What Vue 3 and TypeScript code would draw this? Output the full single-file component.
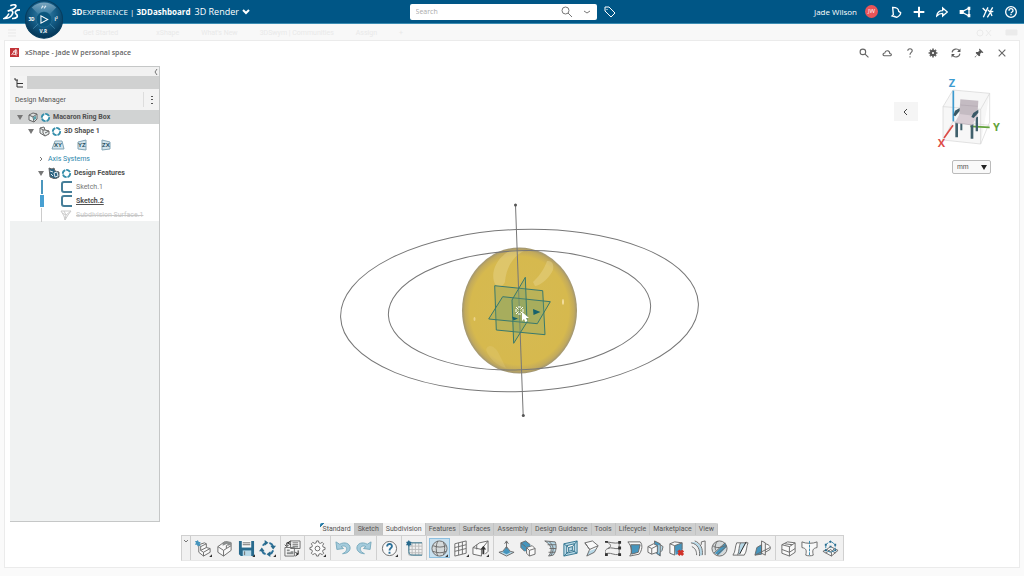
<script setup lang="ts">
import { ref } from 'vue'

// Each shape pairs a paint class with its path data on an 18 x 18 grid.
type Shape = [paint: string, d: string]
interface Tool { name: string; shapes: Shape[]; more?: boolean }

const search = ref('')
const unit = ref('mm')
const activeTool = ref('Sphere')

const tabs = [
  { name: 'Standard', tone: 'light marked' },
  { name: 'Sketch', tone: 'dark' },
  { name: 'Subdivision', tone: 'light' },
  { name: 'Features', tone: '' },
  { name: 'Surfaces', tone: '' },
  { name: 'Assembly', tone: '' },
  { name: 'Design Guidance', tone: '' },
  { name: 'Tools', tone: '' },
  { name: 'Lifecycle', tone: '' },
  { name: 'Marketplace', tone: '' },
  { name: 'View', tone: '' },
]

const groups: Tool[][] = [
  [
    { name: 'New component', more: true, shapes: [
      ['white', 'M4 5l6-2 2 1v4l4 1v4l-7 4-6-4z'],
      ['line', 'M4 5l6-2 2 1-6 3-2-2v8l5 4 7-4V9l-4-1V4M6 7v4l3 2v4M9 13l7-4M6 11l6-3'],
      ['blue', 'M3 0l1 2h2L5 4l1 2H4L3 7 2 5H0l1-2-1-2h2z'] ] },
    { name: 'Insert', shapes: [
      ['white', 'M2 7l7-5 7 1v8l-8 6-6-4z'], ['line', 'M2 7v6l6 4v-6L2 7l7-5 7 1v8l-8 6M8 11l3-2V6l5-3M11 9l5-3'],
      ['gray', 'M7 3l4-2 5 1v3l-3 1-1-2-5 2z'] ] },
    { name: 'Save', more: true, shapes: [
      ['navy', 'M1 1h16v16H3l-2-2z'], ['white', 'M4 1h10v7H4z'], ['pale', 'M5 11h9v6H5z'],
      ['line', 'M5 3h8M5 5h8M7 12v4'] ] },
    { name: 'Update', more: true, shapes: [
      ['ringblue', 'M4 6a6 6 0 0 1 4-3M11 3a6 6 0 0 1 4 4M15 11a6 6 0 0 1-4 4M7 15a6 6 0 0 1-4-4'],
      ['navy', 'M6 0l4 3-4 3zM18 6l-3 4-3-4zM12 12v6l-4-3zM0 12l3-4 3 4z'] ] },
  ],
  [
    { name: 'Replace', shapes: [
      ['white', 'M7 1h10v8H7zM1 8h10v9H1z'], ['line', 'M7 1h10v8H7zM1 8h10v9H1zM9 3h6M9 5h6'],
      ['gray', 'M3 10h3v2H3zM7 12h3v3H3v-2h4zM9 6h6v2H9z'], ['darkline thin', 'M3 6V3h3M1 5l2 2 2-2M15 11v4h-2M15 15l-3-2M15 15l-3 2M4 3l3-2M4 3l3 2'] ] },
  ],
  [
    { name: 'Settings', more: true, shapes: [
      ['outline', 'M8 1h2l.5 2 1.5.6L14 2.500l1.500 1.500-1.100 2 .6 1.500 2 .5v2l-2 .5-.6 1.500 1.100 2L14 15.500l-2-1.100-1.500.6-.5 2H8l-.5-2-1.500-.6-2 1.100L2.500 14l1.100-2L3 10.500 1 10V8l2-.5L3.600 6 2.500 4 4 2.500l2 1.100L7.500 3z'],
      ['outline', 'M11.500 9a2.500 2.500 0 1 1-5 0a2.500 2.500 0 1 1 5 0z'] ] },
  ],
  [
    { name: 'Undo', shapes: [['sky', 'M1 2l1 8 7-1-2.500-2c4-2 7 1 5.500 4-.6 1.500-2 2.500-4 3.500 5 0 8-3 8-6 0-5-6-7-11-4z']] },
    { name: 'Redo', shapes: [['sky', 'M17 2l-1 8-7-1 2.500-2c-4-2-7 1-5.500 4 .6 1.500 2 2.500 4 3.500-5 0-8-3-8-6 0-5 6-7 11-4z']] },
  ],
  [
    { name: 'Help', more: true, shapes: [
      ['outline', 'M16.500 9a7.500 7.500 0 1 1-15 0a7.500 7.500 0 1 1 15 0z'],
      ['ringblue', 'M6.500 7c0-4 5.500-3.500 5 0-.3 1.500-2.500 2-2.500 4M9 12.500v2'] ] },
  ],
  [
    { name: 'Subdivision sketch', shapes: [
      ['faint', 'M3 3h14v13H3zM6.500 3v13M10 3v13M13.500 3v13M3 6.500h14M3 10h14M3 13.500h14'],
      ['blueline', 'M3 3h14M3 3v9c0 3 1 4 4 4h10'], ['navy', 'M3 0l1 1.500 2 .5-1 1.500L6 5.500l-2 0L3 7 2 5.500H0l1-2L0 2l2-.5z'] ] },
  ],
  [
    { name: 'Sphere', more: true, shapes: [
      ['ball', 'M17 9A8 8 0 1 1 1 9a8 8 0 1 1 16 0z'],
      ['line', 'M17 9A8 8 0 1 1 1 9a8 8 0 1 1 16 0zM7 1c-2 5-2 11 0 16M13 2c2 4 2 10 0 14M2 6c5 2 10 2 14 0M2 12c5 2 10 2 14 0'] ] },
    { name: 'Plane grid', more: true, shapes: [
      ['white', 'M3 4l12-3v13L3 17z'], ['line', 'M3 4l12-3v13L3 17zM7 3v13M11 2v13M3 8l12-3M3 12l12-3'] ] },
    { name: 'Box pull', more: true, shapes: [
      ['white', 'M1 8l7-5 9-2v11l-6 5-10-2z'], ['line', 'M1 8v7l9 2v-7L1 8l7-5 9-2v11l-3 3M10 10l7-9M5 5v5'],
      ['dark', 'M11 15v-5H9l3-4 3 4h-2v5z'] ] },
  ],
  [
    { name: 'Extrude', shapes: [
      ['pale', 'M1 13l4-1 4-5 4 5 4 1-8 4z'], ['blue', 'M5 13l4-6 4 6-4 2z'], ['line', 'M1 13l4-1 4-5 4 5 4 1-8 4zM9 9V1M7 4l2-3 2 3'] ] },
    { name: 'Bridge', shapes: [
      ['blue', 'M2 3l5-2 5 4-1 6-5 1-4-4z'], ['white', 'M8 8l6-2 3 3v6l-6 2-3-3z'],
      ['line', 'M7 1L2 3v5l4 4M7 1l5 4M2 3l5 4M8 8l6-2 3 3v6l-6 2-3-3zM8 8l3 3v6M11 11l6-2'] ] },
    { name: 'Sweep face', shapes: [
      ['pale', 'M4 1l11 1c2 5 1 10-2 14l-5 1c5-6 3-12-4-16z'],
      ['line', 'M4 1l11 1c2 5 1 10-2 14l-5 1c5-6 3-12-4-16zM9 2c5 5 5 9 1 15M7 5l9 0M9 9h7M8 13l7 0'] ] },
    { name: 'Inset', shapes: [
      ['pale', 'M2 4l14-3v13L2 17z'], ['white', 'M5 6l8-2v8l-8 2z'], ['pale', 'M7 8l4-1v4l-4 1z'],
      ['blueline', 'M2 4l14-3v13L2 17zM5 6l8-2v8l-8 2zM7 8l4-1v4l-4 1zM2 4l5 4M16 1l-5 6M16 14l-5-3M2 17l5-5'] ] },
    { name: 'Bend', shapes: [
      ['white', 'M2 3l8-2 6 5-4 7-8 4 2-7z'], ['pale', 'M6 12l8-3-2 4-8 4z'],
      ['line', 'M2 3l8-2 6 5-4 7-8 4 3-7zM2 3l5 7M7 10l9-4'] ] },
    { name: 'Edge chain', shapes: [
      ['line', 'M1 2c4 0 8 2 14 1M3 9c4-2 7 1 12 0M1 15c4-3 9 2 14 0M2 2c5 3 5 5 1 7s-3 4-2 6M15 3v13'],
      ['dark', 'M14 1h3v3h-3zM14 7h3v3h-3zM14 14h3v3h-3zM0 14h3v3H0zM0 1h3v2H0z'] ] },
    { name: 'Fill', shapes: [
      ['white', 'M2 2l13 0 2 3-3 10-10 2 2-7z'], ['blue', 'M5 5h10l-2 8-7 2z'],
      ['line', 'M2 2h13c3 3 2 9-1 13L4 17c3-5 2-10-2-15zM5 5h10l-2 8-7 2z'] ] },
    { name: 'Mirror', shapes: [
      ['blue', 'M8 1l6 3v13l-6-4z'], ['white', 'M1 7l6-3 4 2v7l-6 2-4-2z'], ['pale', 'M12 5l5 2-1 4-4 4z'],
      ['line', 'M1 7l6-3 4 2v7l-6 2-4-2zM1 7l4 2v6M5 9l6-3M8 4V1l6 3v13l-4-3M14 5l3 2-1 4-2 2'] ] },
    { name: 'Remove face', shapes: [
      ['white', 'M2 4l5-2 8 1v9l-7 4-6-3z'], ['blue', 'M7 6l8-3v10l-7 3z'],
      ['line', 'M2 4l5-2 8 1-8 3zM2 4v10l5 2V6M15 3v7'], ['cross', 'M11 11l5 5M16 11l-5 5'] ] },
    { name: 'Offset curve', shapes: [
      ['pale', 'M1 3c7 1 10 7 9 14l3-1C14 8 9 2 4 2z'],
      ['line', 'M1 3c7 1 10 7 9 14M2 7c4 2 5 5 5 9M5 1c6 2 9 8 8 15M12 2l4-1v15M12 2v3'] ] },
    { name: 'Sphere cut', shapes: [
      ['ball', 'M17 9A8 8 0 1 1 1 9a8 8 0 1 1 16 0z'], ['blue', 'M4 14L15 3l2 4-9 9z'],
      ['line', 'M17 9A8 8 0 1 1 1 9a8 8 0 1 1 16 0zM3 14L15 3M6 16l10-9M2 6c5 4 9 1 14 0M7 1c-3 4-3 7-2 10'] ] },
    { name: 'Split', shapes: [
      ['white', 'M5 3h12l-3 13H1z'], ['pale', 'M9 3h6L8 15H6z'],
      ['line', 'M5 3h12c-2 4-1 9-4 13H1C4 12 3 7 5 3zM9 3c-2 4-1 8-3 13'], ['darkline thin', 'M15 2L8 15'] ] },
    { name: 'Symmetry', shapes: [
      ['blue', 'M3 8l5-3v10l-7 1z'], ['white', 'M12 4c5 0 6 3 5 6l-5 4z'],
      ['line', 'M8 1l4 2v13l-4-2zM3 8l5-3v10l-7 1zM12 4c5 1 6 4 5 6l-5 3M1 16l16-8'] ] },
  ],
  [
    { name: 'Box mesh', shapes: [
      ['white', 'M2 5l6-3 8 1v10l-6 4-8-3z'],
      ['line', 'M2 5l6-3 8 1-6 4zM2 5v9l8 3V7M16 3v10l-6 4M2 10l8 3 6-4M5 4l8 1'] ] },
    { name: 'Align symmetry', shapes: [
      ['white', 'M1 2c4 2 12 2 16 0v6l-4 2v6c-2 1-6 1-8 0v-6L1 8z'],
      ['line', 'M1 2c4 2 12 2 16 0v6c-5 1-5 3-4 8-2 1-6 1-8 0 1-5 1-7-4-8z'], ['bluedash', 'M9 1v16'] ] },
    { name: 'Control mesh', shapes: [
      ['white', 'M1 12l8-5 8 3-7 7z'],
      ['line', 'M1 12l4-2 4-3 4 2 4 2-7 6zM5 10l5 3 3-4M10 13v4M4 14l5-4 5 4'],
      ['bluedash', 'M4 5l5-4 5 4v6l-5 2-5-2z'], ['navy', 'M3 4h2v2H3zM8 1h2v2H8zM13 4h2v2h-2zM8 6h2v2H8zM3 10h2v2H3zM13 10h2v2h-2z'] ] },
  ],
]

const windowTools: { name: string; shapes: Shape[] }[] = [
  { name: 'Find', shapes: [['wline', 'M12 7A5 5 0 1 1 2 7a5 5 0 1 1 10 0zM11 11l6 6']] },
  { name: 'Cloud', shapes: [['wline', 'M4 14h11c3-1 2-4-1-4 0-6-8-7-9-1-4 0-4 4-1 5z']] },
  { name: 'Help', shapes: [['wline', 'M5 5c0-5 8-5 8 0 0 3-4 3-4 7M9 15v2']] },
  { name: 'Settings', shapes: [
    ['gearfill', 'M9 3a6 6 0 1 0 0 12a6 6 0 1 0 0-12zM9 7a2 2 0 1 1 0 4a2 2 0 1 1 0-4z'],
    ['teeth', 'M9 1v3M9 14v3M1 9h3M14 9h3M3.500 3.500l2 2M12.500 12.500l2 2M14.500 3.500l-2 2M5.500 12.500l-2 2'] ] },
  { name: 'Refresh', shapes: [
    ['wline', 'M2 8c1-7 10-8 13-3M16 10c-1 7-10 8-13 3'], ['wfill', 'M11 7h6V1zM1 17v-6h6z'] ] },
  { name: 'Pin', shapes: [['wfill', 'M10 1l7 7-2 1-2-1-2 3v3l-2 1-3-3-4 5-1-1 5-4-3-3 1-2h3l3-2-1-2z']] },
  { name: 'Close', shapes: [['wline', 'M3 3l12 12M15 3L3 15']] },
]

const barTools: { name: string; shapes: Shape[] }[] = [
  { name: 'Notifications', shapes: [['hbold', 'M4 2l1 11-2 2 7 2c4-2 6-5 6-7l-3-2c0-4-4-6-9-6zM6 15l4 2']] },
  { name: 'Add', shapes: [['hheavy', 'M9 1v16M1 9h16']] },
  { name: 'Share', shapes: [['hbold', 'M1 15c1-6 4-8 9-8V3l7 6-7 6v-4c-4 0-6 1-9 4z']] },
  { name: 'Network', shapes: [['hbold', 'M15 3L4 9l11 6M15 3v12'], ['hfill', 'M13 1h4v5h-4zM1 6h6v6H1zM13 12h4v5h-4z']] },
  { name: 'Community', shapes: [['hbold', 'M1 3l5 5 3-6M6 8l-4 9M9 6l3 3 4-7M13 9l-5 8M12 9l5-1M13 10l2 5']] },
  { name: 'Support', shapes: [['hbold', 'M17 9A8 8 0 1 1 1 9a8 8 0 1 1 16 0zM6 7c0-4 6-4 6 0 0 2-3 2-3 4M9 12v2']] },
]

const ghostTabs = ['Get Started', 'xShape', "What's New", '3DSwym | Communities', 'Assign', '+']
</script>

<template>
  <div class="app">
    <header class="bar">
      <svg class="logo" viewBox="0 0 54 50" aria-label="3DS">
        <path d="M22 8C31 3 42 4 38 11C35 16 28 19 21 21" />
        <path d="M14 24C27 18 33 25 27 35C22 43 13 46 4 46C11 42 15 37 18 31" />
        <path d="M51 20C40 20 33 26 39 32C48 39 41 47 27 46" />
      </svg>
      <button class="compass" aria-label="Compass">
        <svg viewBox="0 0 112 114">
          <defs>
            <radialGradient id="globe" cx="50%" cy="35%" r="65%">
              <stop offset="0" stop-color="#3c84ab" /><stop offset=".55" stop-color="#125982" /><stop offset="1" stop-color="#033353" />
            </radialGradient>
            <linearGradient id="gloss" x2="0" y2="1">
              <stop offset="0" stop-color="#a0bfd2" stop-opacity=".75" /><stop offset="1" stop-color="#4787ab" stop-opacity=".5" />
            </linearGradient>
          </defs>
          <circle cx="56" cy="57" r="55" fill="url(#globe)" stroke="#063e60" stroke-width="3" />
          <path d="M20 22C40 2 72 2 92 22L72 42C62 34 50 34 40 42z" fill="url(#gloss)" />
          <circle cx="56" cy="57" r="23" fill="#0a557d" stroke="#397da0" />
          <path d="M47 46v22l20-11z" fill="none" stroke="#fff" stroke-width="3" />
          <path d="M24 84l15-14M88 84L73 70" stroke="#4c91b5" stroke-width="2" />
          <path d="M48 24l6-7M56 24l6-7M50 17l3 4M58 17l3 4" stroke="#dbe8f0" stroke-width="3" />
          <text x="10" y="62">3D</text><text x="87" y="62">i²</text><text x="43" y="98">V,R</text>
        </svg>
      </button>
      <div class="brand"><b>3D</b>EXPERIENCE | <b>3DDashboard</b></div>
      <button class="board">3D Render
        <svg viewBox="0 0 8 6"><path d="M1 1l3 3 3-3" /></svg>
      </button>
      <form class="search" @submit.prevent>
        <input v-model="search" type="text" placeholder="Search" aria-label="Search" />
        <button aria-label="Run search"><svg viewBox="0 0 12 12"><path d="M8 4.500a3.500 3.500 0 1 1-7 0a3.500 3.500 0 1 1 7 0zM7 7l4 4" /></svg></button>
        <button aria-label="Search options"><svg viewBox="0 0 12 12"><path d="M3 5l3 2 3-2" /></svg></button>
      </form>
      <button class="tag" aria-label="Tags">
        <svg viewBox="0 0 12 12"><path d="M1 1l4 0 6 6-4 4-6-6zM3 3v1" /></svg>
      </button>
      <div class="account">
        <span class="user">Jade Wilson</span>
        <span class="avatar">JW</span>
        <button v-for="t in barTools" :key="t.name" :aria-label="t.name">
          <svg viewBox="0 0 18 18"><path v-for="(s, i) in t.shapes" :key="i" :class="s[0]" :d="s[1]" /></svg>
        </button>
      </div>
    </header>

    <nav class="ghost" aria-label="Dashboard tabs">
      <svg class="burger" viewBox="0 0 8 8"><path d="M0 1h8M0 4h8M0 7h8" /></svg>
      <a v-for="g in ghostTabs" :key="g" href="#">{{ g }}</a>
      <svg class="ghost-tools" viewBox="0 0 42 8"><path d="M7 4A3 3 0 1 1 1 4a3 3 0 1 1 6 0zM10 1l5 6M15 1l-5 6" /><path class="solid" d="M30 1h11v5H30z" /></svg>
    </nav>

    <main class="widget">
      <div class="title">
        <svg class="appicon" viewBox="0 0 18 18">
          <path fill="#c23438" d="M0 0h18v18H0z" />
          <path fill="none" stroke="#fff" stroke-width="1.500" d="M3 14l8-11v10M5 12l9 2M6 6l6 4M13 3l1 9" />
        </svg>
        <h1>xShape - Jade W personal space</h1>
        <div class="window-tools">
          <button v-for="t in windowTools" :key="t.name" :aria-label="t.name">
            <svg viewBox="0 0 18 18"><path v-for="(s, i) in t.shapes" :key="i" :class="s[0]" :d="s[1]" /></svg>
          </button>
        </div>
      </div>

      <div class="workspace">
        <svg class="scene" viewBox="5 64 1014 503">
          <defs>
            <radialGradient id="body" cx="50%" cy="50%" r="50%">
              <stop offset="0" stop-color="#d5ba53" /><stop offset=".86" stop-color="#d6b94e" />
              <stop offset=".95" stop-color="#c2aa5c" /><stop offset="1" stop-color="#a09573" />
            </radialGradient>
          </defs>
          <ellipse cx="519.500" cy="310.500" rx="57.500" ry="63" fill="url(#body)" />
          <path class="shine" d="M495 284c-5-11 1-25 13-32 5-2 11-2 16-1-11 5-18 17-19 31-2 5-8 6-10 2z" />
          <path class="shine" d="M533 282c7-6 12-15 14-21 6-1 8 6 5 11-4 7-11 13-17 14z" />
          <path class="shine faded" d="M486 350c1-5 7-6 12 2l8 16c-8-2-17-9-20-18z" />
          <ellipse cx="563" cy="302" rx="1" ry="3" fill="#f4dfa0" />
          <ellipse cx="474.500" cy="319" rx="1" ry="2" fill="#ebd28a" />
          <g class="orbit">
            <ellipse cx="519.500" cy="310.500" rx="179" ry="81" transform="rotate(-2.200 519.500 310.500)" />
            <ellipse cx="519.500" cy="310.300" rx="131.200" ry="59.500" transform="rotate(-2.200 519.500 310.300)" />
            <path d="M515.500 205l7.700 210.500" />
          </g>
          <circle cx="515.500" cy="205" r="1.500" fill="#555" /><circle cx="523.300" cy="415.500" r="1.500" fill="#555" />
          <g class="plane">
            <path d="M494.700 285.700l48 5 2.300 44-48.700-4.700z" />
            <path d="M502.700 296.700l47.600 5-13 22-48.600-4.700z" />
            <path d="M525.300 277.300L527 322l-13.300 21.300L512 300z" />
          </g>
          <path fill="#17616c" d="M533 309l7.500 3-7 3zM512 316.500l6 2-4.500 2z" />
          <path class="target" d="M516 307l2.500 2.500M523 307l-2.500 2.500M516 314l2.500-2.500M523 314l-2.500-2.500M518 307h3M518 314h3M516 309v3M523 309v3" />
          <path fill="#fff" d="M522 312v9l2-2 1.500 3 2-1-1.500-3h3z" />
        </svg>

        <aside class="manager">
          <div class="strip"><button aria-label="Collapse panel"><svg viewBox="0 0 6 8"><path d="M4 1L2 4l2 3" /></svg></button></div>
          <div class="tabrow"><button aria-label="Tree"><svg viewBox="0 0 10 10"><path d="M1 0v2M1 2h3M3 2v7h6M3 5.500h6" /></svg></button></div>
          <div class="heading"><span>Design Manager</span><button aria-label="More options"><svg viewBox="0 0 4 10"><path d="M1 1h2v1H1zM1 4h2v1H1zM1 8h2v1H1z" /></svg></button></div>
          <ul class="tree">
            <li class="row d0 selected">
              <svg class="twisty" viewBox="0 0 10 10"><path d="M2 3h6L5 8z" /></svg>
              <svg class="node" viewBox="0 0 12 12"><path d="M2 4l4-2 4 1v5l-3 3-5-2zM2 4l4 2 4-3M6 6l1 5" /><path class="teal" d="M6 6l3-1v3L7 9z" /></svg>
              <svg class="ring" viewBox="0 0 12 12"><circle cx="6" cy="6" r="4" /></svg>
              <b>Macaron Ring Box</b>
            </li>
            <li class="row d1">
              <svg class="twisty" viewBox="0 0 10 10"><path d="M2 3h6L5 8z" /></svg>
              <svg class="node" viewBox="0 0 12 12"><path d="M2 3l4-1 1 3 4 1v3l-4 2-5-3zM2 3l3 2 2 0M5 5v3l2 3M7 8l4-2" /></svg>
              <svg class="ring" viewBox="0 0 12 12"><circle cx="6" cy="6" r="4" /></svg>
              <b>3D Shape 1</b>
            </li>
            <li class="row axes">
              <svg viewBox="0 0 14 12"><path d="M4 2h7l2 8H1z" /><text x="3" y="8">XY</text></svg>
              <svg viewBox="0 0 14 12"><path d="M3 3l8-2v10l-8-1z" /><text x="3" y="8">YZ</text></svg>
              <svg viewBox="0 0 14 12"><path d="M3 1l8 2v7l-8 1z" /><text x="3" y="8">ZX</text></svg>
            </li>
            <li class="row d2">
              <svg class="twisty open" viewBox="0 0 10 10"><path d="M4 3l2 2-2 2" /></svg>
              <a href="#">Axis Systems</a>
            </li>
            <li class="row d2">
              <svg class="twisty" viewBox="0 0 10 10"><path d="M2 3h6L5 8z" /></svg>
              <svg class="node" viewBox="0 0 12 12"><path class="navy" d="M1 1l3 1 2-1 1 3 4 1v5l-4 2-5-2z" /><path class="chalk" d="M2 4l3 1M6 6l3-1 1 4-3 1zM3 7l2 2" /></svg>
              <svg class="ring" viewBox="0 0 12 12"><circle cx="6" cy="6" r="4" /></svg>
              <b>Design Features</b>
            </li>
            <li class="row d2 step">
              <i class="rail"></i>
              <svg class="sketch" viewBox="0 0 12 12"><path d="M12 1H4Q2 1 2 3v6q0 2 2 2h8" /></svg>
              <span>Sketch.1</span>
            </li>
            <li class="row d2 step">
              <i class="rail current"></i>
              <svg class="sketch" viewBox="0 0 12 12"><path d="M12 1H4Q2 1 2 3v6q0 2 2 2h8" /></svg>
              <b class="under">Sketch.2</b>
            </li>
            <li class="row d2 step">
              <i class="rail after"></i>
              <svg class="sketch off" viewBox="0 0 12 12"><path d="M1 2h10l-3 4-3 5-1-4zM4 2l2 4 5-4M2 4l4 2-1 5" /></svg>
              <s>Subdivision Surface.1</s>
            </li>
          </ul>
        </aside>

        <button class="fold" aria-label="Show view options"><svg viewBox="0 0 8 8"><path d="M5 1L2 4l3 3" /></svg></button>
        <svg class="cube" viewBox="170 20 195 219">
          <path class="glass" d="M188 112l30-50 110 10-27 152-113-12z" />
          <path class="edges" d="M188 112l30-50 110 10-27 48zM188 112v100l113 12V120M328 72v86l-27 66M218 62v94l110 12M218 156l-30 56" />
          <path stroke="#3d9bd0" stroke-width="5" d="M219 64v92" />
          <path stroke="#62a33b" stroke-width="5" d="M270 171l58 3" />
          <path stroke="#dd4b45" stroke-width="5" d="M218 168l-27 38" />
          <path fill="#40606c" d="M225 160h8v44h-8zM271 164h8v44h-8zM286 142h7v44h-7zM240 156h6v27h-6z" />
          <path fill="#c4bbc2" d="M240 90l54 4-3 48-54-5z" />
          <path fill="#d9ced5" d="M238 134l52 7-14 26-53-7z" />
          <path stroke="#b2a8b0" stroke-width="2" d="M241 107l51 4M223 160l53 7" />
          <path fill="#3a5966" d="M238 116v9l-13 16-6-3 5-14zM294 121v9l-14 16-7-3 6-12z" />
          <text class="z" x="205" y="54">Z</text><text class="y" x="338" y="186">Y</text><text class="x" x="172" y="233">X</text>
        </svg>
        <div class="unit">
          <select v-model="unit" aria-label="Length unit"><option>mm</option><option>cm</option><option>m</option></select>
          <svg viewBox="0 0 6 6"><path d="M0 1h6L3 6z" /></svg>
        </div>

        <section class="dock" aria-label="Commands">
          <div class="tabs" role="tablist">
            <button v-for="t in tabs" :key="t.name" role="tab" :class="t.tone">{{ t.name }}</button>
          </div>
          <div class="tools">
            <button class="grip" aria-label="Toolbar options"><svg viewBox="0 0 6 4"><path d="M1 1l2 2 2-2" /></svg></button>
            <div v-for="(g, gi) in groups" :key="gi" class="group">
              <button v-for="t in g" :key="t.name" :aria-label="t.name" :class="{ active: t.name === activeTool }" @click="activeTool = t.name">
                <svg viewBox="0 0 18 18">
                  <path v-for="(s, i) in t.shapes" :key="i" :class="s[0]" :d="s[1]" />
                  <path v-if="t.more" class="dark" d="M18 15v3h-3z" />
                </svg>
              </button>
            </div>
          </div>
        </section>
      </div>
    </main>
  </div>
</template>

<style>
body { margin: 0; background: #fafafa; }
</style>

<style scoped>
* { box-sizing: border-box; }
.app { min-height: 100vh; display: flex; flex-direction: column; font: 7px/10px Roboto, "Liberation Sans", Arial, sans-serif; color: #555; background: #fafafa; overflow: hidden; }
button { padding: 0; border: 0; background: none; color: inherit; font: inherit; display: flex; align-items: center; justify-content: center; }
svg { display: block; flex: none; }
a { color: inherit; text-decoration: none; }

.bar { position: relative; display: flex; align-items: center; height: 24px; background: #005686; border-bottom: 1px solid #3b8db3; color: #fff; font: 9px/12px "Open Sans", "Noto Sans", sans-serif; }
.logo { width: 18px; height: 17px; margin-left: 3px; fill: none; stroke: #fff; stroke-width: 5; }
.compass { position: absolute; z-index: 2; left: 25px; top: 0; width: 38px; height: 39px; border-radius: 50%; }
.compass svg { width: 38px; height: 39px; }
.compass text { fill: #fff; font: bold 14px "Open Sans", sans-serif; }
.brand { margin-left: 51px; font-size: 8px; white-space: pre; }
.board { margin-left: 4px; gap: 3px; }
.board svg { width: 8px; height: 6px; fill: none; stroke: #fff; stroke-width: 2; }
.search { position: absolute; left: 40%; top: 4px; width: 187px; height: 16px; display: flex; align-items: center; background: #fff; border-radius: 2px; }
.search input { flex: 1; min-width: 0; padding: 0 6px; border: 0; outline: 0; background: none; font: 7px/14px "Open Sans", sans-serif; color: #555; }
.search input::placeholder { color: #aaa; }
.search button { width: 20px; }
.search svg { width: 12px; height: 12px; fill: none; stroke: #777; }
.tag { position: absolute; left: 59%; top: 6px; }
.tag svg { width: 12px; height: 12px; fill: none; stroke: #fff; }
.account { margin-left: auto; padding-right: 2px; display: flex; align-items: center; font-size: 8px; }
.avatar { width: 13px; height: 13px; margin: 0 6px 0 8px; border-radius: 50%; background: #ea5458; font-size: 6px; line-height: 13px; text-align: center; }
.account button { width: 23px; height: 20px; }
.account svg { width: 12px; height: 12px; }
.hbold { fill: none; stroke: #fff; stroke-width: 2; }
.hheavy { fill: none; stroke: #fff; stroke-width: 3; }
.hfill { fill: #fff; }

.ghost { display: flex; align-items: center; height: 16px; padding: 2px 6px 0 8px; gap: 22px; color: #e9e9e9; background: #f8f8f8; }
.burger { width: 8px; height: 8px; margin-right: 45px; stroke: #e9e9e9; }
.ghost a:nth-of-type(1) { margin-right: 16px; }
.ghost-tools { width: 42px; height: 8px; margin-left: auto; fill: none; stroke: #ebebeb; }
.ghost-tools .solid { fill: #ebebeb; }

.widget { flex: 1; display: flex; flex-direction: column; margin: 0 4px 8px; background: #fff; border: 1px solid #ebebeb; }
.title { display: flex; align-items: center; height: 23px; padding: 0 6px 0 5px; }
.appicon { width: 9px; height: 9px; }
h1 { margin: 0 0 0 6px; font: 600 7px/12px "Open Sans", sans-serif; color: #666; }
.window-tools { display: flex; margin-left: auto; }
.window-tools button { width: 23px; height: 20px; }
.window-tools svg { width: 10px; height: 10px; }
.wline, .teeth { fill: none; stroke: #666; stroke-width: 2; }
.teeth { stroke-width: 3; }
.wfill, .gearfill { fill: #555; fill-rule: evenodd; }

.workspace { position: relative; flex: 1; display: flex; flex-direction: column; padding: 2px 0 6px 5px; }
.scene { position: absolute; inset: 0; width: 100%; height: 100%; }
.shine { fill: #ead997; opacity: .4; }
.shine.faded { opacity: .2; }
.orbit { fill: none; stroke: #777; stroke-width: 1; }
.plane { fill: #6f9e6e; fill-opacity: .26; stroke: #39796d; stroke-width: 1; }
.target { fill: none; stroke: #fff; stroke-width: 1; }

.manager { position: relative; flex: 1; width: 150px; max-width: 40%; margin-bottom: 1px; background: #f0f2f2; border: 1px solid #c5c7c7; border-left: 0; display: flex; flex-direction: column; }
.strip { height: 9px; display: flex; justify-content: flex-end; background: #f1f1f1; }
.strip svg { width: 6px; height: 8px; fill: none; stroke: #777; }
.tabrow { height: 13px; background: #d0d1d1; display: flex; }
.tabrow button { width: 17px; background: #f3f3f3; }
.tabrow svg { width: 10px; height: 10px; fill: none; stroke: #333; }
.heading { height: 21px; display: flex; align-items: center; justify-content: space-between; padding-left: 5px; background: #f3f3f3; }
.heading button { width: 16px; height: 15px; border-left: 1px solid #ddd; }
.heading svg { width: 4px; height: 10px; fill: #555; }
.tree { margin: 0; padding: 0; list-style: none; background: #fff; }
.row { height: 14px; display: flex; align-items: center; white-space: nowrap; color: #666; }
.row:last-child { height: 13px; }
.row b { color: #505050; }
.d0 { padding-left: 5px; }
.d1 { padding-left: 16px; }
.d2 { padding-left: 26px; }
.selected { background: #d1d3d3; }
.twisty { width: 10px; height: 10px; fill: #777; margin-right: 2px; }
.twisty.open { fill: none; stroke: #777; }
.node { width: 12px; height: 12px; fill: #e9eeee; stroke: #666; stroke-width: 1; }
.node .teal { fill: #59a1ac; stroke: none; }
.node .navy { fill: #2b6483; }
.node .chalk { fill: none; stroke: #e0eaf0; }
.ring { width: 11px; height: 11px; margin: 0 2px 0 1px; fill: #fff; stroke: #348eab; stroke-width: 2; stroke-dasharray: 5 1; }
.axes { padding-left: 41px; gap: 10px; }
.axes svg { width: 14px; height: 12px; fill: #d3e4ec; stroke: #83a5b5; }
.axes text { font: bold 6px "Liberation Sans", sans-serif; fill: #234d60; stroke: none; }
.row a { color: #2d87ac; }
.step { color: #777; }
.rail { width: 11px; height: 14px; margin-right: 13px; background: linear-gradient(#4b96bd, #4b96bd) 5px 0 / 2px 100% no-repeat; }
.rail.current { background: linear-gradient(#48a0d2, #48a0d2) 4px 1px / 4px 12px no-repeat; }
.rail.after { background: linear-gradient(#ccc, #ccc) 5px 0 / 1px 100% no-repeat; }
.sketch { width: 12px; height: 12px; margin-right: 4px; fill: none; stroke: #467e99; stroke-width: 2; }
.off { stroke: #ccc; stroke-width: 1; }
.under { text-decoration: underline; }
.row s { color: #c7c7c7; }

.fold { position: absolute; right: 101px; top: 38px; width: 24px; height: 19px; background: #f5f5f5; }
.fold svg { width: 8px; height: 8px; fill: none; stroke: #444; }
.cube { position: absolute; right: 17px; top: 12px; width: 65px; height: 73px; fill: none; }
.glass { fill: #f7f7f7; }
.edges { stroke: #d5d5d5; stroke-width: 2; }
.cube text { font: bold 33px "Open Sans", sans-serif; }
.z { fill: #3d9bd0; }
.y { fill: #62a33b; }
.x { fill: #dd4b45; }
.unit { position: absolute; right: 28px; top: 96px; width: 39px; height: 14px; }
.unit select { width: 100%; height: 14px; padding: 0 4px; appearance: none; border: 1px solid #bbb; border-radius: 2px; background: #f9f9f9; color: #555; font: 7px/12px "Liberation Sans", sans-serif; }
.unit svg { position: absolute; right: 4px; top: 4px; width: 6px; height: 6px; fill: #222; pointer-events: none; }

.dock { position: relative; align-self: center; width: 663px; max-width: 100%; margin-right: 5px; }
.tabs { display: flex; width: max-content; margin-left: 139px; border-radius: 2px 2px 0 0; overflow: hidden; }
.tabs button { height: 12px; padding: 0 3px; background: #cfd0d0; border-right: 1px solid #c2c3c3; color: #555; }
.tabs .light { background: #f4f4f4; }
.tabs .dark { background: #c5c6c6; }
.tabs .marked { background: linear-gradient(135deg, #277ca8 3px, #f4f4f4 3px); }
.tools { display: grid; grid-template-columns: 9px 91fr 24fr 26fr 46fr 25fr 25fr 67fr 282fr 67fr; height: 26px; background: #f1f1f1; border: 1px solid #d0d0d0; border-bottom-color: #e8e8e8; }
.grip { border-right: 1px solid #ccc; align-items: flex-start; padding-top: 3px; }
.grip svg { width: 6px; height: 4px; fill: none; stroke: #777; }
.group { display: flex; align-items: center; padding: 0 2px; border-right: 1px solid #d0d0d0; min-width: 0; }
.group:last-child { border-right: 0; }
.group button { flex: 1; min-width: 0; height: 20px; }
.group svg { width: 17px; height: 17px; }
.group .active { background: #c8e0ef; outline: 1px solid #8dbfdf; outline-offset: -1px; }
.line, .outline, .blueline, .ringblue, .faint, .darkline, .bluedash, .cross { fill: none; stroke: #6a6a6a; stroke-width: 1; stroke-linejoin: round; }
.outline { fill: #fafafa; }
.faint { stroke: #bbb; }
.blueline { stroke: #32758f; }
.bluedash { stroke: #3287ad; stroke-dasharray: 3 1; }
.ringblue { stroke: #2c7199; stroke-width: 2; }
.darkline { stroke: #222; stroke-width: 2; }
.darkline.thin { stroke-width: 1; }
.cross { stroke: #d13228; stroke-width: 3; }
.tools .white { fill: #f9f9f9; }
.tools .gray { fill: #8a8d8d; }
.tools .blue { fill: #4695bd; }
.tools .navy { fill: #286a8d; }
.tools .pale { fill: #b7d8e7; }
.tools .sky { fill: #a4cbdc; stroke: #78aabd; stroke-width: 1; }
.tools .ball { fill: #d5d9da; }
.tools path.dark { fill: #333; }
</style>
